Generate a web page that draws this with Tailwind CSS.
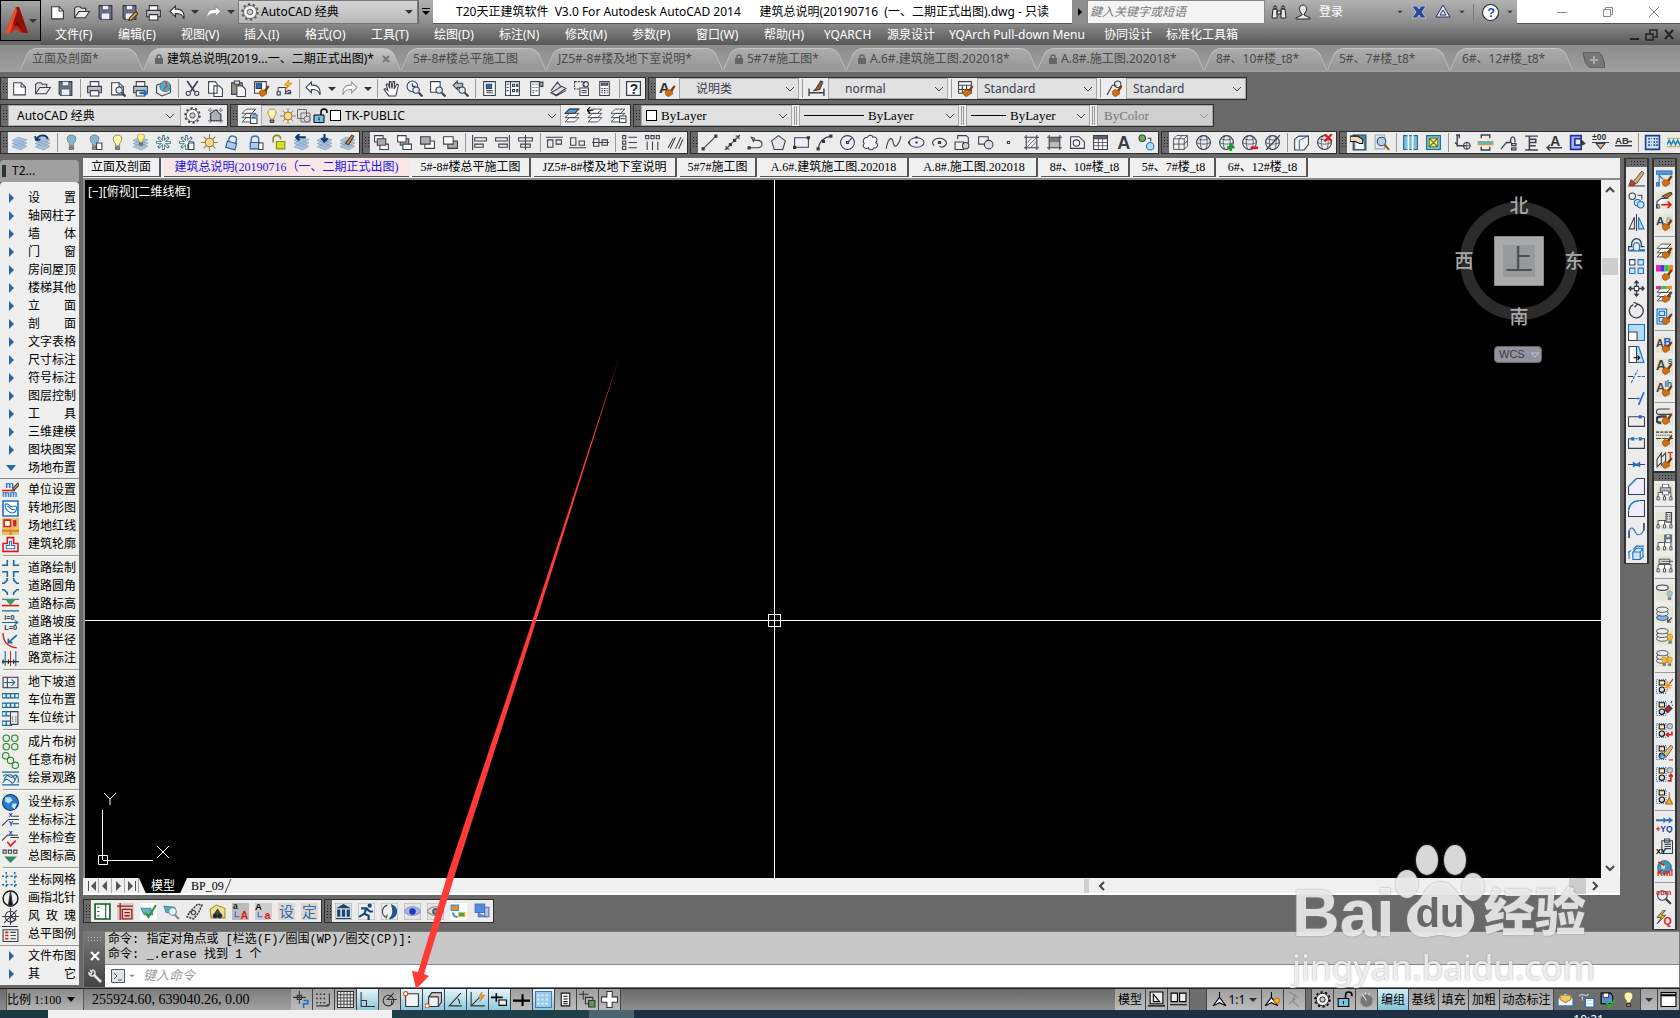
<!DOCTYPE html>
<html lang="zh-CN">
<head>
    <meta charset="UTF-8">
    <meta name="viewport" content="width=device-width, initial-scale=1.0">
    <title>T20天正建筑软件 V3.0 For Autodesk AutoCAD 2014</title>
    <script src="https://cdn.jsdelivr.net/npm/@tailwindcss/browser@4"></script>
</head>
<body class="relative flex min-h-screen flex-col overflow-hidden bg-[#696969] font-['Noto_Sans','Noto_Sans_CJK_SC',sans-serif] text-xs text-black">

    <!-- title bar + menu -->
    <header class="flex">
        <button aria-label="应用程序菜单" class="flex h-[41px] w-[41px] shrink-0 items-center border border-black bg-linear-to-b from-[#a6a6a6] to-[#5e5e5e] pl-1">
            <svg class="h-7 w-6" viewBox="0 0 24 28"><path d="M11 0 0 26h6l5-4 5 4h7L14 0z" fill="#c8240f"/><path d="M11 0 6 20l5-4 5 8 3 2h4L14 0z" fill="#8d1208"/><path d="M11 0 0 26h5L12 4z" fill="#ee4a2c"/><path d="M9 20l3-6 4 6c-2-2-5-2-7 0z" fill="#5c0a05"/></svg>
            <svg class="h-1.5 w-2" viewBox="0 0 8 6"><path d="M0 1h8L4 5z" fill="#333"/></svg>
        </button>
        <div class="flex min-w-0 flex-1 flex-col">
            <div class="flex h-6 bg-linear-to-b from-[#b2b2b2] to-[#8b8b8b]">
                <div class="flex w-[197px] items-center pl-1 text-[#333]" data-icons="new open save saveas print undo . redo ." data-pitch="wide"></div>
                <div class="flex w-[180px] items-center border border-[#777] bg-linear-to-b from-[#d4d4d4] to-[#b8b8b8] pl-0.5">
                    <svg class="size-[18px] text-[#555]" data-icon="gear"></svg>
                    <select aria-label="工作空间" class="min-w-0 flex-1 appearance-none bg-transparent pl-0.5 text-[12px] leading-5"><option>AutoCAD 经典</option></select>
                    <svg class="mr-1 h-1.5 w-2" viewBox="0 0 8 6"><path d="M0 1h8L4 5z" fill="#333"/></svg>
                </div>
                <button aria-label="自定义" class="flex w-[15px] items-center justify-center border-l border-[#666]"><svg class="size-2" viewBox="0 0 8 8"><path d="M0 0h8v1H0zM0 3h8L4 7z"/></svg></button>
                <h1 class="flex flex-1 items-center justify-center overflow-hidden whitespace-pre border-b border-[#555] bg-white text-[12px]">T20天正建筑软件  V3.0 For Autodesk AutoCAD 2014      建筑总说明(20190716  (一、二期正式出图).dwg - 只读</h1>
                <button aria-label="搜索" class="flex w-[15px] items-center justify-center bg-[#8e8e8e]"><svg class="size-2" viewBox="0 0 8 8"><path d="M2 0v8l4-4z"/></svg></button>
                <input aria-label="搜索" placeholder="鍵入关键字或短语" class="w-[178px] border border-[#888] bg-[#f4f4f4] px-0.5 text-[12px] italic placeholder:text-[#777]">
                <div class="flex w-[252px] items-center gap-2 pl-1.5 text-[#222]">
                    <svg class="size-4" data-icon="binoc"></svg>
                    <svg class="size-4" data-icon="user"></svg>
                    <a href="#" class="text-white">登录</a>
                    <svg class="ml-auto h-1 w-1.5" viewBox="0 0 8 6"><path d="M0 1h8L4 5z" fill="#333"/></svg>
                    <svg class="size-4" data-icon="exchange"></svg>
                    <svg class="size-4" data-icon="a360"></svg>
                    <svg class="h-1 w-1.5" viewBox="0 0 8 6"><path d="M0 1h8L4 5z" fill="#333"/></svg>
                    <span class="h-4 w-px bg-[#777]"></span>
                    <svg class="size-[17px]" data-icon="helpround"></svg>
                    <svg class="mr-1 h-1 w-1.5" viewBox="0 0 8 6"><path d="M0 1h8L4 5z" fill="#333"/></svg>
                </div>
                <div class="flex w-[163px] items-center justify-end gap-[34px] border-b border-[#555] bg-white pr-5 text-[#888]">
                    <svg class="size-3" viewBox="0 0 12 12" fill="none" stroke="currentColor"><path d="M1 6.500h10"/></svg>
                    <svg class="size-3" viewBox="0 0 12 12" fill="none" stroke="currentColor"><path d="M1.500 3.500h7v7h-7zM3.500 3.500v-2h7v7h-2"/></svg>
                    <svg class="size-3" viewBox="0 0 12 12" fill="none" stroke="currentColor"><path d="M1 1l10 10M11 1 1 11"/></svg>
                </div>
            </div>
            <nav class="flex h-[21px] items-center whitespace-nowrap bg-linear-to-b from-[#8a8a8a] to-[#575757] pl-0.5 text-[12px] text-white">
                <a href="#" class="w-[63px] pl-3">文件(F)</a><a href="#" class="w-[63px] pl-3">编辑(E)</a><a href="#" class="w-[63px] pl-3">视图(V)</a><a href="#" class="w-[61px] pl-3">插入(I)</a><a href="#" class="w-[66px] pl-3">格式(O)</a><a href="#" class="w-[63px] pl-3">工具(T)</a><a href="#" class="w-[65px] pl-3">绘图(D)</a><a href="#" class="w-[66px] pl-3">标注(N)</a><a href="#" class="w-[67px] pl-3">修改(M)</a><a href="#" class="w-[64px] pl-3">参数(P)</a><a href="#" class="w-[68px] pl-3">窗口(W)</a><a href="#" class="w-[60px] pl-3">帮助(H)</a><a href="#" class="w-[63px] pl-3">YQARCH</a><a href="#" class="w-[62px] pl-3">源泉设计</a><a href="#" class="w-[155px] pl-3">YQArch Pull-down Menu</a><a href="#" class="w-[62px] pl-3">协同设计</a><a href="#" class="pl-3">标准化工具箱</a>
                <svg class="mr-1 ml-auto h-3 w-12 text-[#222]" viewBox="0 0 48 12" fill="none" stroke="currentColor" stroke-width="2"><path d="M2 10h9"/><path d="M18 5h7v6h-7zM22 4V1h7v7h-3" stroke-width="1.500"/><path d="M37 1l8 9M45 1l-8 9"/></svg>
            </nav>
        </div>
    </header>

    <!-- open files -->
    <div id="fileTabs" class="flex h-[27px] items-end bg-linear-to-b from-[#8c8c8c] to-[#a0a0a0] pl-5"></div>

    <!-- toolbars -->
    <div class="flex flex-col gap-1 pt-[5px] pb-1">
        <div class="flex h-[23px] gap-0.5">
            <div data-bar="new open save | print preview plot publish | cut copy paste match blockedit | undo . redo . | pan zoomrt zoomwin zoomprev | props dcenter toolpal sheet markup calc | help"></div>
            <div data-bar="textstyle @说明类 | dimstyle @normal | tablestyle @Standard | mleader @Standard"></div>
        </div>
        <div class="flex h-[23px] gap-0.5">
            <div class="flex w-[228px] border border-[#2e2e2e] bg-[#ececec]">
                <span data-grip></span>
                <div class="relative flex flex-1 border border-[#a8a8a8] bg-[#e1e1e1]">
                    <select aria-label="工作空间" class="w-full appearance-none pl-2 text-[12px] leading-5"><option>AutoCAD 经典</option></select>
                    <svg class="pointer-events-none absolute top-1.5 right-1.5 h-2 w-2" viewBox="0 0 8 8" fill="none" stroke="#444"><path d="M0 2l4 4 4-4"/></svg>
                </div>
                <div class="flex items-center text-[#3a404c]" data-icons="gear wsset"></div>
            </div>
            <div class="flex w-[401px] border border-[#2e2e2e] bg-[#ececec]">
                <span data-grip></span>
                <div class="flex items-center text-[#3a404c]" data-icons="layermgr"></div>
                <div class="relative flex flex-1 items-center border border-[#a8a8a8] bg-[#e1e1e1] pl-0.5">
                    <svg class="size-4" data-icon="bulb"></svg><svg class="size-4" data-icon="sun"></svg><svg class="size-4 opacity-50" data-icon="vpfreeze"></svg><svg class="size-4" data-icon="unlock"></svg>
                    <span class="ml-0.5 size-[11px] border border-black bg-white"></span>
                    <select aria-label="图层" class="min-w-0 flex-1 appearance-none pl-1 leading-5"><option>TK-PUBLIC</option></select>
                    <svg class="pointer-events-none absolute top-1.5 right-1 h-2 w-2" viewBox="0 0 8 8" fill="none" stroke="#444"><path d="M0 2l4 4 4-4"/></svg>
                </div>
                <div class="flex items-center text-[#3a404c]" data-icons="laycur layprev layst"></div>
            </div>
            <div class="flex w-[581px] border border-[#2e2e2e] bg-[#ececec] font-['Liberation_Serif','Noto_Sans_CJK_SC',serif] text-[13px]">
                <span data-grip></span>
                <div class="relative flex w-[151px] items-center border border-[#a8a8a8] bg-[#e1e1e1] pl-1">
                    <span class="size-[11px] border border-black bg-white"></span>
                    <select aria-label="颜色" class="min-w-0 flex-1 appearance-none pl-1 leading-5"><option>ByLayer</option></select>
                    <svg class="pointer-events-none absolute top-1.5 right-1 h-2 w-2" viewBox="0 0 8 8" fill="none" stroke="#444"><path d="M0 2l4 4 4-4"/></svg>
                </div>
                <span class="mx-0.5 my-px w-[3px] border-x border-[#999]"></span>
                <div class="relative flex w-[160px] items-center border border-[#a8a8a8] bg-[#e1e1e1] pl-1">
                    <span class="h-px w-[60px] bg-black"></span>
                    <select aria-label="线型" class="min-w-0 flex-1 appearance-none pl-1 leading-5"><option>ByLayer</option></select>
                    <svg class="pointer-events-none absolute top-1.5 right-1 h-2 w-2" viewBox="0 0 8 8" fill="none" stroke="#444"><path d="M0 2l4 4 4-4"/></svg>
                </div>
                <span class="mx-0.5 my-px w-[3px] border-x border-[#999]"></span>
                <div class="relative flex w-[124px] items-center border border-[#a8a8a8] bg-[#e1e1e1] pl-1">
                    <span class="h-px w-[35px] bg-black"></span>
                    <select aria-label="线宽" class="min-w-0 flex-1 appearance-none pl-1 leading-5"><option>ByLayer</option></select>
                    <svg class="pointer-events-none absolute top-1.5 right-1 h-2 w-2" viewBox="0 0 8 8" fill="none" stroke="#444"><path d="M0 2l4 4 4-4"/></svg>
                </div>
                <span class="mx-0.5 my-px w-[3px] border-x border-[#999]"></span>
                <div class="relative flex flex-1 items-center border border-[#a8a8a8] bg-[#cfcfcf] pl-1.5 text-[#777]">
                    <select aria-label="打印样式" disabled class="min-w-0 flex-1 appearance-none leading-5"><option>ByColor</option></select>
                    <svg class="pointer-events-none absolute top-1.5 right-1 h-2 w-2" viewBox="0 0 8 8" fill="none" stroke="#999"><path d="M0 2l4 4 4-4"/></svg>
                </div>
            </div>
        </div>
        <div class="flex h-[23px] gap-0.5">
            <div data-bar="laystack layback | bulboff bulboffdoc bulb bulblay flake flakedoc sunlay lockb lockdoc unlocky layarr laydown laypen"></div>
            <div data-bar="front back above under | alignl alignr alignc | disth distb distm | listv listh hatchl"></div>
            <div data-bar="line cline pline polygon rect arc circle cloud spline ellipse earc insert mkblock point hatch gradient region table text addsel"></div>
            <div data-bar="cube sphere sphadd sphdel sphoff | cubecut sphx"></div>
            <div data-bar="hand find | col2 window | axis beam leader elev atext brk level abtext | grid wave"></div>
        </div>
    </div>

    <div class="flex flex-1">
        <!-- tool palette -->
        <aside class="flex w-[79px] shrink-0 flex-col pt-0.5 pb-[3px]">
            <div class="flex h-[22px] items-center rounded-t bg-[#a0a0a0] pl-0.5"><span class="h-3 w-1 bg-[radial-gradient(#333_1px,transparent_1px)] bg-[size:2px_3px]"></span><span class="pl-1.5">T2...</span></div>
            <div id="palette" class="flex flex-1 flex-col rounded-t bg-[#efefef] pt-[7px]"></div>
        </aside>

        <main class="ml-1 flex min-w-0 flex-1 flex-col">
            <div class="flex flex-1">
                <div class="flex min-w-0 flex-1 flex-col">
                    <div class="mr-1 flex flex-1 flex-col">
                        <div id="docTabs" class="flex h-5 gap-[3px] bg-[#f0f0f0] font-['Liberation_Serif','Noto_Sans_CJK_SC',serif] text-[12px]"></div>
                        <div class="flex flex-1 border-t-2 border-l-2 border-[#8a8a8a]">
                            <!-- drawing area -->
                            <section class="relative flex-1 overflow-hidden bg-black text-white">
                                <div class="absolute top-1 left-[3px] text-[12px] whitespace-nowrap">[−][俯视][二维线框]</div>
                                <div class="absolute inset-y-0 left-[689px] w-px bg-white"></div>
                                <div class="absolute inset-x-0 top-[440px] h-px bg-white"></div>
                                <div class="absolute top-[434px] left-[683px] size-[13px] border border-white"></div>
                                <svg class="absolute bottom-3 left-[10px] h-[74px] w-[78px]" viewBox="0 0 78 74" fill="none" stroke="#fff"><path d="M3.500 63.500h9v9h-9zM7.500 68V18M8 68.500h50M9 1l6 6 6-6M15 7v6M62 54l12 12M74 54 62 66"/></svg>
                                <svg class="absolute top-[10px] right-[15px] h-[162px] w-[134px]" viewBox="0 0 134 162" font-family="Noto Sans CJK SC, sans-serif">
                                    <circle cx="67" cy="71" r="53" fill="none" stroke="#2b2b2b" stroke-width="12"/>
                                    <g fill="#a8a8a8" font-size="19" font-weight="500" text-anchor="middle"><text x="67" y="23">北</text><text x="67" y="134">南</text><text x="12" y="78">西</text><text x="122" y="78">东</text></g>
                                    <path d="M42.500 46.500h49v49h-49z" fill="#aaa" stroke="#888"/><path d="M51 55h32v32H51z" fill="#969a9c"/>
                                    <text x="67" y="80" font-size="28" text-anchor="middle" fill="#4c5052" font-family="Noto Sans CJK SC">上</text>
                                </svg>
                                <button class="absolute top-[166px] right-[59px] flex h-[17px] w-12 items-center gap-1.5 rounded border border-[#666] bg-[#92939f] pl-1 font-['Liberation_Sans',sans-serif] text-[11px] text-[#3c3c44]">WCS<svg class="h-1.5 w-2" viewBox="0 0 8 6" fill="none" stroke="#c0c0cc"><path d="M0 1h8L4 5z"/></svg></button>
                            </section>
                            <div class="flex w-[19px] flex-col items-center border-r border-white bg-[#f0f0f0] text-[#444]">
                                <svg class="mt-1 h-3 w-2.5" viewBox="0 0 10 12" fill="none" stroke="currentColor" stroke-width="2"><path d="M1 8l4-4 4 4"/></svg>
                                <span class="mt-[62px] h-[17px] w-4 bg-[#cdcdcd]"></span>
                                <svg class="mt-auto mb-1 h-3 w-2.5" viewBox="0 0 10 12" fill="none" stroke="currentColor" stroke-width="2"><path d="M1 4l4 4 4-4"/></svg>
                            </div>
                        </div>
                        <div class="flex h-[17px] items-center border-b-2 border-white bg-[#f0f0f0] pl-[3px] font-['Liberation_Serif','Noto_Sans_CJK_SC',serif] text-[12px]">
                            <button aria-label="第一个" class="flex h-full w-[13px] items-center justify-center border-r border-[#aaa]"><svg class="size-2.5" viewBox="0 0 10 10" fill="#555"><path d="M1 0h1v10H1zM9 0v10L4 5z"/></svg></button>
                            <button aria-label="上一个" class="flex h-full w-[13px] items-center justify-center border-r border-[#aaa]"><svg class="size-2.5" viewBox="0 0 10 10" fill="#555"><path d="M7 0v10L2 5z"/></svg></button>
                            <button aria-label="下一个" class="flex h-full w-[13px] items-center justify-center border-r border-[#aaa]"><svg class="size-2.5" viewBox="0 0 10 10" fill="#555"><path d="M3 0v10l5-5z"/></svg></button>
                            <button aria-label="最后一个" class="flex h-full w-[14px] items-center justify-center border-r border-[#aaa]"><svg class="size-2.5" viewBox="0 0 10 10" fill="#555"><path d="M8 0h1v10H8zM1 0v10l5-5z"/></svg></button>
                            <button class="h-full w-[48px] bg-black text-center leading-4 text-white [clip-path:polygon(0_0,100%_0,86%_100%,14%_100%)]">模型</button>
                            <button class="pl-1">BP_09</button>
                            <svg class="h-4 w-2" viewBox="0 0 8 16" fill="none" stroke="#444"><path d="M1 15 7 1"/></svg>
                            <span class="mr-2 ml-auto h-3.5 w-[5px] bg-[#d0d0d0]"></span>
                            <div class="flex w-[523px] items-center text-[#444]">
                                <svg class="size-2.5" viewBox="0 0 10 10" fill="none" stroke="currentColor" stroke-width="2"><path d="M7 1 3 5l4 4"/></svg>
                                <span class="mr-1 ml-auto h-4 w-[17px] bg-[#cdcdcd]"></span>
                                <svg class="mr-5 size-2.5" viewBox="0 0 10 10" fill="none" stroke="currentColor" stroke-width="2"><path d="M3 1l4 4-4 4"/></svg>
                            </div>
                        </div>
                    </div>
                    <div class="mt-1 mb-2 flex h-6 gap-0.5">
                        <div data-bar="bframe bdim bcheck bview bgear bhouse bAA bAa bshe bding"></div>
                        <div data-bar="bank runner swap eye eyeg imgsw pc"></div>
                    </div>
                </div>
                <!-- modify toolbars -->
                <div class="flex items-start gap-[3px] pr-[3px]">
                    <div data-vbar="erase copyobj mirror offset array move rotate scale stretch trim extend breakpt break join chamfer fillet blend explode"></div>
                    <div class="flex flex-col">
                        <div data-vbar="mprop mline mtext | mlay mcolor mlaycol mblock | mAB mAs mAh | mcloud mltype mhatch"></div>
                        <div data-vbar="tprint | tcalc tsave topen | gbulb gload glamp glamps | sspark sred sundo serase sredo ssweep | yq clip kml | com flashq"></div>
                    </div>
                </div>
            </div>

            <!-- command line -->
            <div class="flex h-[57px] shrink-0 border border-[#777]">
                <div class="flex w-[21px] flex-col items-center justify-between bg-linear-to-b from-[#7a7a7a] to-[#444] pt-1 pb-1">
                    <span class="h-1.5 w-4 bg-[radial-gradient(#bbb_1px,transparent_1px)] bg-[size:3px_3px]"></span>
                    <svg class="size-2.5" viewBox="0 0 10 10" fill="none" stroke="#fff" stroke-width="2"><path d="M1 1l8 8M9 1 1 9"/></svg>
                    <svg class="size-3.5" viewBox="0 0 14 14" fill="none" stroke="#e8e8e8" stroke-width="2.500"><path d="M6 6l7 7"/><path d="M2 1l2 2-1 2-2-1c0 3 3 4 5 2 2-2 1-5-2-5" stroke-width="1.500"/></svg>
                </div>
                <div class="flex flex-1 flex-col">
                    <div class="h-[33px] border-b border-[#888] bg-[#c8c8c8] pt-px pl-[3px] font-['Liberation_Mono','Noto_Sans_CJK_SC',monospace] text-[12px] leading-[15px] whitespace-pre">命令: 指定对角点或 [栏选(F)/圈围(WP)/圈交(CP)]:
命令: _.erase 找到 1 个</div>
                    <div class="flex flex-1 items-center bg-white pl-1.5">
                        <svg class="size-3.5 bg-[#dfe3ea]" viewBox="0 0 14 14" fill="none" stroke="#556"><path d="M.5.5h13v13H.5zM3 4l3 3-3 3M7 11h4"/></svg>
                        <svg class="ml-1 h-1 w-1.5" viewBox="0 0 8 6"><path d="M0 1h8L4 5z" fill="#888"/></svg>
                        <input aria-label="键入命令" placeholder="键入命令" class="ml-2 flex-1 text-[13px] italic placeholder:text-[#999]">
                    </div>
                </div>
            </div>
        </main>
    </div>

    <!-- status bar -->
    <footer class="flex h-[22px] shrink-0 border-t border-[#222] bg-linear-to-b from-[#6a6a6a] to-[#8e8e8e]">
        <button class="ml-1.5 flex w-[78px] items-center gap-1.5 border-x border-[#555] bg-linear-to-b from-[#8a8a8a] to-[#b4b4b4] font-['Liberation_Serif','Noto_Sans_CJK_SC',serif] text-[12px]">比例 1:100<svg class="h-1.5 w-2" viewBox="0 0 8 6"><path d="M0 0h8L4 5z"/></svg></button>
        <output class="w-[207px] bg-linear-to-b from-[#7c7c7c] to-[#a2a2a2] pl-2 font-['Liberation_Serif',serif] text-[14px] leading-[22px]">255924.60, 639040.26, 0.00</output>
        <div id="toggles" class="flex"></div>
        <div id="statusRight" class="ml-auto flex"></div>
    </footer>
    <div class="flex h-2 shrink-0 overflow-hidden bg-[#1d2f42]"><span class="w-12 bg-[#1d3a42]"></span><span class="w-[344px] bg-[#f0f0f0]"></span><span class="w-[197px] bg-[#1f3f4b]"></span><span class="w-[45px] bg-[#4b6470]"></span><span class="mr-[76px] ml-auto pt-0.5 leading-4 text-white">10:21</span></div>

    <!-- red pointer -->
    <svg class="pointer-events-none absolute top-[356px] left-[410px] h-[634px] w-[214px]" viewBox="0 0 214 634"><path d="M209.500 0 118 278 39 514 8 616l-6-1 4 18 13-13-5-2 33-106 75-234z" fill="#ff3a37"/></svg>

    <!-- watermark -->
    <div class="pointer-events-none absolute right-[84px] bottom-[26px] flex w-[304px] flex-col text-white/75 drop-shadow-[0_0_1px_#888]">
        <div class="flex h-[98px] items-end">
            <span class="w-[104px] font-['Liberation_Sans',sans-serif] text-[66px] leading-[58px] font-bold">Bai</span>
            <svg class="h-[98px] w-[88px]" viewBox="0 0 88 98" fill="#fff" fill-opacity=".75"><ellipse cx="11" cy="40" rx="11" ry="14"/><ellipse cx="31" cy="16" rx="11" ry="15"/><ellipse cx="59" cy="16" rx="11" ry="15"/><ellipse cx="77" cy="43" rx="11" ry="14"/><path d="M44 38c-14 0-16 16-26 23-12 9-8 32 10 32 8 0 10-2 16-2s8 2 16 2c18 0 24-22 12-32-12-9-14-23-28-23z"/><text x="44" y="83" text-anchor="middle" font-size="40" font-weight="bold" font-family="Liberation Sans, sans-serif" fill="#686868" fill-opacity="1">du</text></svg>
            <span class="font-['Noto_Sans_CJK_SC',sans-serif] text-[51px] leading-[66px] font-black">经验</span>
        </div>
        <span class="text-[35px] leading-[50px]">jingyan.baidu.com</span>
    </div>

    <script>
        // shared pieces of the icons, all on a 16x16 grid
        const B = '#1c6fc4', R = '#e01818';
        const brush = '<path d="M10 10l4-5 1.500 1-3 5z" fill="#7a3c12" stroke="none"/><path d="M6 11l2-2 4 1 1 3-4 2.500c-2-.5-3.500-2-3-4.500z" fill="#d2700f" stroke="#8a430a" stroke-width=".6"/>';
        const mag = '<circle cx="9.500" cy="9.500" r="3" fill="#dcebf7"/><path d="M12 12l3.500 3.500" stroke-width="2"/>';
        const sheets = '<path d="M1 12l6-3 8 2.500-6 3.500zM1 9l6-3 8 2.500L9 12zM1 6l6-3 8 2.500L9 9z" fill="#a9c4de" stroke="#7f9cba" stroke-width=".6"/>';
        const stack = '<path d="M1 14h9l4-4H5zM1 10h9l4-4H5zM1 6h9l4-4H5z" fill="#fff" stroke-width=".8"/>';
        const lamp = c => `<path d="M8 1c-5 0-5 5-2 8v2h4V9c3-3 3-8-2-8z" fill="${c}" stroke="#8b7a3a" stroke-width=".8"/><path d="M6 12h4v2.500H6z" fill="#889" stroke-width=".6"/>`;
        const printer = '<path d="M4 6V1.500h8V6" fill="#fff"/><path d="M1.500 6h13v6h-13z" fill="#b9bec6"/><path d="M4 10h8v5H4z" fill="#fff"/>';
        const page = '<path d="M2.500 2.500h7l4 4v7.500h-11z" fill="#fff"/><path d="M9.500 2.500v4h4"/>';
        const globe = '<circle cx="8" cy="8" r="6.500" fill="#e6eaee"/><path d="M1.500 8c3 2 10 2 13 0M3 4.500c3 1.500 7 1.500 10 0M6.500 1.500c-2 4-2 9 0 13M10 1.500c2 4 2 9 0 13" stroke-width=".7"/>';
        const lock = '<path d="M4 8V5c0-4 7-4 7 0v3" stroke="#4a7ab0" stroke-width="1.500"/><path d="M3 8h9v6H3z" fill="#a8cdee" stroke="#2a5a9a"/>';
        const flake = '<path d="M8 1v14M1 8h14M3 3l10 10M13 3 3 13" stroke="#4a7a84" stroke-width="2.500"/><path d="M8 2v12M2 8h12M4 4l8 8M12 4l-8 8" stroke="#e8f4f6"/>';
        const sun = '<path d="M8 0v16M0 8h16M2.500 2.500l11 11M13.500 2.500l-11 11" stroke="#886"/><circle cx="8" cy="8" r="4" fill="#f8d890" stroke="#a8761c"/>';
        const disk = '<path d="M2 1.500h12v13H3.500L2 13z" fill="#6b7688"/><path d="M5 1.500h6v4H5zM4 8.500h8v6H4z" fill="#eef" stroke-width=".6"/>';
        const undo = '<path d="M1 7l5-5v3c6-1 9 3 8 9-1-4-3-5-8-5v3z" fill="#fff"/>';
        const sel = '<path d="M.5 1.500h9v13h-9z" stroke="#3d6fb8" stroke-dasharray="1 1"/><path d="M3 2.500h5v4H3z" fill="#ffeeb0" stroke="#111"/><circle cx="5.500" cy="11" r="2.500" fill="#ddd" stroke="#111"/>';
        const tan = '<path d="M0 0h16v16H0z" fill="#e6e4d2" stroke="none"/>';
        const tree = '<path d="M1 15v-3h2v3zM7 15v-3h2v3zM13 15v-3h2v3zM2 12V8h12v4M8 12V8" fill="#fff" stroke-width=".8"/>';
        const discs = '<g fill="#eee" stroke-width=".8"><ellipse cx="6" cy="10" rx="5.500" ry="2.500"/><ellipse cx="6" cy="6.500" rx="5.500" ry="2.500"/><ellipse cx="6" cy="3" rx="5.500" ry="2.500"/></g>';
        const ch = (t, x, y, s, c) => `<text x="${x}" y="${y}" font-size="${s}" fill="${c}" stroke="none" font-weight="bold" font-family="Liberation Sans, Noto Sans CJK SC">${t}</text>`;

        const I = {
            new: page, open: '<path d="M1.500 13V4l2-1.500h3L8 4h4v3" fill="#ddd"/><path d="M1.500 13l4-6h10l-4 6z" fill="#e9edf2"/>',
            save: disk, saveas: disk + '<path d="M8 13l6-6 2 2-6 6-2.500.5z" fill="#f0a030"/>', print: printer, undo,
            redo: `<g transform="matrix(-1 0 0 1 16 0)" stroke="#999">${undo}</g>`,
            gear: '<circle cx="8" cy="8" r="7" stroke-dasharray="2.200 2.200" stroke-width="1.500"/><circle cx="8" cy="8" r="5.800" fill="#f4f4f4" stroke-width=".8"/><circle cx="8" cy="8" r="2.500" fill="#ccc" stroke-width=".8"/>',
            binoc: '<path d="M2 5h4v9H1zM10 5h4l1 9h-5zM3 2h2v3H3zM11 2h2v3h-2zM6 7h4v3H6z" fill="#e8e8e8"/>',
            user: '<path d="M8 1c-5 0-4 7-1 9v1l-6 3v1h14v-1l-6-3v-1c3-2 4-9-1-9z" fill="#e8e8e8"/>',
            exchange: '<path d="M1 2h5l2 3 2-3h5l-4 6 4 6h-5l-2-3-2 3H1l4-6z" fill="#2b4a9a" stroke="#e0e4f0" stroke-width=".6"/>',
            a360: '<path d="M8 1l7 12H1zM8 6l3 5H5z" fill="#e4e8f4" stroke="#26335c"/>',
            helpround: '<circle cx="8" cy="8" r="7.500" fill="#fff" stroke="#223"/>' + ch('?', 5, 12.500, 12, '#1d4fb4'),
            preview: page + mag, plot: printer + `<path d="M7 11h4V8.500l4.500 4-4.500 3.500v-2.500H7z" fill="${B}" stroke="none"/>`,
            publish: '<path d="M1.500 5l8-3 5 3v7l-8 3-5-3z" fill="#eee"/><circle cx="9.500" cy="6" r="5" fill="#4bb0cc" stroke-width=".5"/><path d="M9 1c3 2 2 6-1 8l4-4" fill="#e8c22a" stroke="#d33"/>',
            cut: '<path d="M3 1l7 10M13 1 6 11" stroke-width="1.500"/><circle cx="4" cy="12.500" r="2"/><circle cx="12" cy="12.500" r="2"/>',
            copy: '<path d="M1.500 1.500h6l2 2v9h-8zM6.500 5.500h5l3 3v7h-8z" fill="#fff"/>',
            paste: '<path d="M1.500 2.500h10v11h-10z" fill="#9a8f80"/><path d="M4 1h5v3H4z" fill="#ddd"/><path d="M6.500 5.500h5l3 3v7h-8z" fill="#fff"/>',
            match: `<path d="M1.500 1.500h11v11h-11z" fill="#fff"/><path d="M3 3h5v5H3z" fill="${B}"/>` + brush,
            blockedit: '<path d="M2 7h7v5c2-3 5-3 5 0h-3M2 7v4M1 11h3v3H1zM8 13h6" /><path d="M12 0L8 5h3l-2 4 6-6h-3z" fill="#f5c518" stroke="#d8701c" stroke-width=".7"/>',
            pan: '<path d="M5.500 15 1 9l1-1 2.500 2L3 4l1.500-.5L6.500 8 6 1.500h1.500L8.500 8l1-6.500H11L10.500 8.500 13 4l1.500.5L12 15z" fill="#fff"/>',
            zoomrt: '<circle cx="6" cy="6" r="5" fill="#eef"/><path d="M6 3v3h3"/>' + mag, zoomwin: '<path d="M1.500 1.500h9v10h-9z" fill="#fff"/>' + mag,
            zoomprev: '<path d="M1 5l4-4v2h5v4H5v2z" fill="#bbb"/>' + mag,
            props: `<path d="M2.500 1.500h11v13h-11z" fill="#fff"/><path d="M5 4h5v4H5z" fill="${B}"/><path d="M5 10h6M5 12h6"/>`,
            dcenter: '<path d="M1.500 1.500h13v13h-13zM6 2v12" fill="#fff"/><path d="M2.500 4h2M2.500 7h2M2.500 10h2M8 4h2v2H8zM12 4h1v2h-1zM8 9h2v2H8zM12 9h1v2h-1z"/>',
            toolpal: '<path d="M3.500 1.500h8v13h-8z" fill="#fff"/><path d="M5 4h2M8 4h2M5 7h2M8 7h2M5 10h2M8 10h2M5 12h2" stroke="#777"/><path d="M12 2h3v4h-3z" fill="#aaa"/>',
            sheet: '<path d="M1 12l10-6 4 2-9 6zM1 10l6-8 3 4M1 12l5 3 9-5" fill="#ddd"/>',
            markup: '<path d="M1.500 1.500h9v7h-9z" stroke-dasharray="2 1"/><path d="M6.500 7.500h8v7h-8z" fill="#fff"/><path d="M8 10h5M8 12h5"/><circle cx="12" cy="4" r="2.500"/>',
            calc: '<path d="M3.500 1.500h9v13h-9z" fill="#fff"/><path d="M5 3h6v2H5z" fill="#777"/><path d="M5 8h6M5 10h6M5 12h6" stroke-dasharray="1.500 1"/>',
            help: '<path d="M1.500 1.500h13v13h-13z" fill="#fff" stroke-width="1.200"/>' + ch('?', 4.500, 13, 13, '#223'),
            textstyle: ch('A', 0, 12, 14, '#333') + brush, dimstyle: '<path d="M1 8v7M15 8v7M1 12h14" stroke-width="1.300"/><path d="M7 9l5-8 2 1-3 7-6 1z" fill="#b55a15"/>',
            tablestyle: '<path d="M1.500 1.500h12v11h-12zM1 5h12M1 9h12M5 5v8M9 5v8" fill="#fff"/>' + brush,
            mleader: '<path d="M1 14 6 5h4"/><circle cx="11" cy="4" r="3"/>' + brush,
            wsset: '<path d="M3.500 13V6l5-3.500 4.500 5V13z" fill="#aab2ba"/><path d="M1 3h14M1 13h14M3 1v14M13 1v14" stroke-width=".8" stroke-dasharray="1.500 1"/>',
            layermgr: stack + '<path d="M9 7.500h6v8H9z" fill="#fff"/><path d="M10 9h4v2h-4z" fill="#1c6fc4" stroke="none"/>',
            bulb: lamp('#fff3b0'), sun, vpfreeze: '<path d="M1.500 1.500h9v9h-9zM5 5h9v9H5z" fill="#ddd"/><circle cx="11" cy="11" r="3" fill="#ccc"/>',
            unlock: '<path d="M9 7V4c0-4 6-4 6 0v1" stroke-width="1.500"/><path d="M2 7h10v7.500H2z" fill="#7ac3e8"/><path d="M7 9.500v3"/>',
            laycur: stack + '<path d="M1 6h9l4-4H5z" fill="#4aa0e0"/>', layprev: stack + '<path d="M0 3h6M3 0 0 3l3 3" stroke="#000"/>', layst: stack + '<path d="M9 8.500h6v6H9z" fill="#fff"/><path d="M10 11h4"/>',
            laystack: sheets, layback: sheets + '<path d="M2 6c2-6 10-6 11-1M2 6 1 2M2 6l4-1" stroke="#123a6a" stroke-width="1.800"/>',
            bulboff: lamp('#7db8dd'), bulboffdoc: lamp('#7db8dd') + '<path d="M10 8.500h5v6h-5z" fill="#fff"/>', bulblay: sheets + `<g transform="translate(2 -1) scale(.8)">${lamp('#fff08a')}</g>`,
            flake, flakedoc: flake + '<path d="M10 8.500h5v6h-5z" fill="#fff"/>', sunlay: sun,
            lockb: '<g transform="rotate(15 8 8)">' + lock + '</g>', lockdoc: lock + '<path d="M11 8.500h4v6h-4z" fill="#fff"/>',
            unlocky: '<path d="M3 8V5c0-5 7-5 7 0" stroke="#8a8a18" stroke-width="1.500"/><path d="M6 7h8v7H6z" fill="#d7dc2a" stroke="#8a8a18"/>',
            layarr: sheets + '<path d="M3 3h9M6 0 3 3l3 3" stroke="#123a6a" stroke-width="2"/>', laydown: sheets + '<path d="M8 0v6M5 4l3 3 3-3" stroke="#123a6a" stroke-width="2"/>',
            laypen: sheets + '<path d="M6 9l6-8 2 1-5 8z" fill="#f08a1c"/>',
            front: '<path d="M1.500 1.500h8v6h-8zM6.500 9.500h8v5h-8z" fill="#fff"/><path d="M4 4.500h8v6H4z" fill="#aaa"/>', back: '<path d="M4 4.500h8v6H4z" fill="#aaa"/><path d="M1.500 1.500h8v6h-8zM6.500 9.500h8v5h-8z" fill="#fff"/>',
            above: '<path d="M5.500 6.500h9v7h-9z" fill="#fff"/><path d="M1.500 2.500h9v7h-9z" fill="#aaa"/>', under: '<path d="M5.500 6.500h9v7h-9z" fill="#aaa"/><path d="M1.500 2.500h9v7h-9z" fill="#fff"/>',
            alignl: '<path d="M1.500 1v14M3.500 3.500h11v3h-11zM3.500 9.500h8v3h-8z"/>', alignr: '<path d="M14.500 1v14M1.500 3.500h11v3h-11zM4.500 9.500h8v3h-8z"/>', alignc: '<path d="M8 1v14M1.500 3.500h13v3h-13zM3.500 9.500h9v3h-9z"/>',
            disth: '<path d="M0 3h16M1.500 5.500h5v7h-5zM9.500 5.500h5v4h-5z"/>', distb: '<path d="M0 13h16M1.500 3.500h5v7h-5zM9.500 6.500h5v4h-5z"/>', distm: '<path d="M0 8h16M1.500 4.500h5v7h-5zM9.500 5.500h5v5h-5z"/>',
            listv: '<path d="M1.500 1.500h3v3h-3zM1.500 6.500h3v3h-3zM1.500 11.500h3v3h-3zM7 3h8M7 8h8M7 13h8"/>', listh: '<path d="M1.500 1.500h3v3h-3zM6.500 1.500h3v3h-3zM11.500 1.500h3v3h-3zM3 7v8M8 7v8M13 7v8"/>', hatchl: '<path d="M1 13 6 4M3 14 8 3M8 14l5-11M11 14l4-9"/>',
            line: '<path d="M2 14 14 2"/><path d="M1 13h2v2H1zM13 1h2v2h-2z" fill="#333"/>', cline: '<path d="M1 15 15 1M11 2h3v3M2 11v3h3"/><path d="M5 9h2v2H5zM9 5h2v2H9z" fill="#333"/>',
            pline: '<path d="M2 13h8c6 0 5-7 0-7H7M7 4 4 3l2 4z"/><path d="M1 12h2v2H1z" fill="#333"/>', polygon: '<path d="M8 1.500l6.500 5-2.500 8H4l-2.500-8z" fill="#e4e8ee"/>',
            rect: '<path d="M1.500 3.500h13v9h-13z" fill="#eef"/><path d="M0 11h3v3H0zM13 2h3v3h-3z" fill="#333" stroke="none"/>', arc: '<path d="M2 14C3 7 8 3 14 2"/><path d="M1 13h2v2H1zM6 6h2v2H6zM13 1h2v2h-2z" fill="#333"/>',
            circle: '<circle cx="8" cy="8" r="6.500" fill="#eef"/><path d="M8 8l4-4M7 7h2v2H7z"/>', cloud: '<path d="M5 3c2-3 5-2 5 0 4-1 5 3 3 5 3 2 1 6-2 5-1 3-5 2-5 0-4 2-6-2-4-4C0 6 2 3 5 3z" fill="#f4f6fa"/>',
            spline: '<path d="M1 14C4 0 7 4 8 9s5 2 7-7"/>', ellipse: '<ellipse cx="8" cy="8" rx="7" ry="4.500" fill="#eef"/><path d="M7 7h2v2H7zM0 7h2v2H0zM7 2h2v2H7z" fill="#333" stroke="none"/>',
            earc: '<path d="M3 11C-1 7 4 4 8 4s8 3 6 6-5 3-6 1"/><path d="M7 7h2v2H7z" fill="#333"/>', insert: '<path d="M3.500 5V1.500h8l2 2V9M1 7.500h8v7H1z" fill="#eee"/><circle cx="11" cy="11" r="3" fill="#ccc"/>',
            mkblock: '<path d="M1.500 2.500h9v7h-9z" fill="#eee"/><circle cx="11" cy="10" r="4" fill="#dde"/>', point: '<path d="M7 7h2v2H7z"/>',
            hatch: '<path d="M1 3h14M1 13h14M3 1v14M13 1v14"/><path d="M4 8l4-4M4 12l8-8M7 13l6-6" stroke-width=".6"/>', gradient: '<path d="M3 3h10v5H3z" fill="#777" stroke="none"/><path d="M3 8h10v5H3z" fill="#bbb" stroke="none"/><path d="M1 3h14M1 13h14M3 1v14M13 1v14"/>',
            region: '<path d="M1.500 13.500v-11h8l5 5v6z" fill="#eef"/><circle cx="7" cy="8.500" r="3" fill="#fff"/>', table: '<path d="M1.500 1.500h13v13h-13z" fill="#fff"/><path d="M1.500 1.500h13v3h-13z" fill="#667"/><path d="M1 8h14M1 11h14M6 4v11M10 4v11" stroke-width=".7"/>',
            text: ch('A', 2, 14, 17, '#3a3f48'), addsel: '<circle cx="4" cy="4" r="3" fill="#6bb34a"/><path d="M9 4h3v3"/><circle cx="11.500" cy="11.500" r="3.500" fill="#b4dcf6" stroke="#1c6fc4"/>',
            cube: '<path d="M1.500 4.500h10v10h-10zM1.500 4.500l3-3h10v10l-3 3M11.500 4.500l3-3M1.500 9.500h10l3-3M6.500 4.500v10M6.500 4.500l3-3" fill="#f4f4f4" stroke-width=".8"/>', sphere: globe,
            sphadd: globe + '<path d="M12 9v7M8.500 12.500h7" stroke="#1d9a26" stroke-width="2.500"/>', sphdel: globe + `<path d="M9 13h7" stroke="${R}" stroke-width="2.500"/>`, sphoff: globe + '<path d="M2 15 15 1" stroke-width="1.200"/>',
            cubecut: `<path d="M1.500 5l4-3h9v8l-4 5h-9z" fill="#f4f4f4"/><path d="M6 6l8-4M6 6v8" stroke="${B}"/>`, sphx: globe + `<path d="M8 0l7 7M15 0 8 7" stroke="${R}" stroke-width="2"/>`,
            hand: '<path d="M3 1h12v14H3z" fill="#3d8ea8"/><path d="M5 7h8v7H5z" fill="#fff" stroke="none"/><path d="M0 2h7l5 3v4H9L5 7H0z" fill="#f5d4b4" stroke="#111"/>', find: '<path d="M2 1h9v13H2z" fill="#dde6ee" stroke="#9ab"/><circle cx="8" cy="7" r="4" fill="#a9d3ee"/><path d="M11 10l4 5" stroke="#8a5a20" stroke-width="2"/>',
            col2: '<path d="M1.500 1.500h13v13h-13z" fill="#7cc0d8" stroke="#1c6a8a"/><path d="M6 1v14M10 1v14" stroke="#fff" stroke-width="1.500"/>', window: '<path d="M1.500 1.500h13v13h-13z" fill="#7cc0d8" stroke="#1c6a8a"/><path d="M4 4h8v8H4zM4 4l8 8M12 4l-8 8" fill="#f1ec7a" stroke="#6a7a2a"/>',
            axis: '<path d="M3 1v10h8M2 1h3v3M1 8l3 3" stroke-width="1.300"/><circle cx="12" cy="11" r="3"/><path d="M8 11h8M12 7v8" stroke-width=".7"/>', beam: '<path d="M1 7h14v3H1z" fill="#58b6c8" stroke="#c8a23a"/><path d="M4 4V1h8v3M4 12v3h8v-3" stroke-width="1.300"/>',
            leader: '<path d="M1 14l5-6h5M10 8c-1-7 5-7 4 0M11 9h4v2h-4zM11 13h4v2h-4z" stroke-width="1.200"/>', elev: '<path d="M2 2h12M6 2v13M6 5h6v3H6M2 15h12M6 11h6" stroke-width="1.400"/>',
            atext: ch('A', 4, 11, 13, '#333') + '<path d="M1 13h14M4 10l-3 3 3 3" stroke-width="1.300"/>', brk: '<path d="M1.500 1.500h10v3h-6v6h6v4h-10z" fill="#9fb6f6" stroke="#2230a8" stroke-width="1.500"/><path d="M11 5v6l4-2z" fill="#333"/>',
            level: ch('±00', 0, 6, 8, '#333') + '<path d="M0 8h16M4 9l4 5 4-5z" fill="#e9b48a"/>', abtext: ch('AB', 0, 9, 9, '#333') + '<path d="M0 11h16M12 7h4" stroke-width="1.300"/>',
            grid: '<path d="M1.500 1.500h13v13h-13z" fill="#cfe3f6" stroke="#1b3e8a" stroke-width="1.500"/><path d="M4 4.500h3M9 4.500h4M4 7.500h3M9 7.500h4M4 10.500h3M9 10.500h4" stroke="#1b3e8a" stroke-dasharray="1.500 1" stroke-width="1.500"/>', wave: '<path d="M0 4h16M0 12h16" stroke="#c8a23a"/><path d="M0 10l2-4 2 4 2-4 2 4 2-4 2 4 2-4 2 4" stroke="#1c88b8" stroke-width="1.500"/>',
            erase: '<path d="M5 11l8-10 2 2-7 10z" fill="#d9b25a" stroke-width=".8"/><path d="M3 9l4 4-2 2-4-1z" fill="#d9361c" stroke-width=".8"/><path d="M0 15h16"/>', copyobj: `<circle cx="4" cy="4" r="3"/><path d="M9 3h4v4"/><g stroke="${B}" fill="#cfe6fa"><circle cx="9" cy="10" r="3"/><circle cx="12" cy="12" r="3"/></g>`,
            mirror: `<path d="M6 3v11H1zM8 0v16"/><path d="M10 3v11h5z" fill="#b4dcf6" stroke="${B}"/>`, offset: `<path d="M.5 14v-4h3C2 0 14 0 12.500 10h3" stroke-width="1.300"/><path d="M.5 14h15v-1h-5c3-9-8-9-5 0h-3" stroke="${B}"/>`,
            array: `<path d="M1.500 1.500h5v5h-5z" fill="#fff"/><path d="M9.500 1.500h5v5h-5zM1.500 9.500h5v5h-5zM9.500 9.500h5v5h-5z" fill="#cfe6fa" stroke="${B}"/>`, move: '<path d="M8 1v14M1 8h14M6 3l2-2 2 2M6 13l2 2 2-2M3 6 1 8l2 2M13 6l2 2-2 2" stroke-width="1.400"/><path d="M6 6h4v4H6z" fill="#fff"/>',
            rotate: '<path d="M9 2a6.500 6.500 0 1 1-4 .5M5 0l4 2-3 3" stroke-width="1.200"/>', scale: `<path d="M.5.5h15v15H.5z" fill="#b4dcf6" stroke="${B}"/><path d="M.5 7.500h8v8h-8z" fill="#fff"/>`,
            stretch: `<path d="M10 .5l5 15h-8V.5z" fill="#b4dcf6" stroke="${B}"/><path d="M1 .5h7v15H1z" fill="#fff"/><path d="M5 11h6M9 9l2 2-2 2" stroke="#000"/>`, trim: `<path d="M0 8h5"/><path d="M3 14 9 2M9 8h7" stroke="${B}" stroke-dasharray="3 1"/>`,
            extend: `<path d="M0 8h8"/><path d="M10 14l5-12M8 8h3" stroke="${B}" stroke-width="1.500"/>`, breakpt: `<path d="M.5 4.500h15M.5 4.500v9h15v-9" /><path d="M10 3h3v3h-3z" fill="${B}" stroke="none"/>`,
            break: `<path d="M4 4.500H.5v9h15v-9H13M7 4.500h2"/><path d="M3 3h3v3H3zM10 3h3v3h-3z" fill="${B}" stroke="none"/>`, join: `<path d="M0 8h16"/><path d="M5 6v4l3-2zM11 6v4L8 8z" fill="${B}" stroke="${B}"/>`,
            chamfer: `<path d="M.5 8v7.500h15V.5H8" fill="#eef"/><path d="M.5 8 8 .5" stroke="${B}" stroke-width="1.300"/>`, fillet: `<path d="M.5 10v5.500h15V.5H11" fill="#eef"/><path d="M.5 10C1 4 5 1 11 .5" stroke="${B}" stroke-width="1.300"/>`,
            blend: `<path d="M1 15V8M15 8V1" stroke-width="1.500"/><path d="M1 8c4-7 6 4 8 4s4 0 6-5" stroke="${B}"/>`, explode: `<path d="M4.500 7.500h7v7h-7zM0 8l3-2M1 14v-6M5 5l3-3h7M14 5v8M8 2 6 4M12 14l3-3M5 7l3-3h6l-2 3" fill="#cfe6fa" stroke="${B}"/>`,
            mprop: tan + `<path d="M0 1h15v3H0zM0 12h3v3H0z" fill="#5b9ae0" stroke="${B}"/><path d="M3 12V5l4 4" stroke="${B}"/>` + brush, mline: tan + '<path d="M1 15V9l4-3h6M0 12h3v3H0z" fill="#fff"/><path d="M5 12h9M11 9l3 3-3 3" stroke="#e01818" stroke-width="1.500"/><path d="M6 4l8-4 1 2-5 4z" fill="#d2700f"/>',
            mtext: tan + ch('A', 0, 10, 11, '#2a4a5a') + ch('a', 9, 8, 10, '#aaa') + brush, mlay: tan + stack + brush,
            mcolor: '<path d="M0 1h4v6H0z" fill="#e8289a"/><path d="M4 1h4v6H4z" fill="#5a28e8"/><path d="M8 1h4v6H8z" fill="#28c85a"/><path d="M12 1h4v6h-4z" fill="#f08a1c"/>'.replaceAll('/>', ' stroke="none"/>') + brush,
            mlaycol: stack + '<path d="M0 0h5v3H0z" fill="#e8289a"/><path d="M5 0h5v3H5z" fill="#28c85a"/><path d="M10 0h5v3h-5z" fill="#f08a1c"/>'.replaceAll('/>', ' stroke="none"/>') + brush,
            mblock: tan + `<path d="M1 1h9v14H1zM3 3h5v4H3zM3 9h4v4H3z" fill="#cfe3f6" stroke="${B}"/>` + brush,
            mAB: tan + ch('A', 0, 10, 10, '#444') + ch('B', 7, 9, 10, '#1c4fd0') + brush, mAs: tan + ch('A', 0, 11, 13, '#444') + ch('s', 11, 6, 8, '#1a6a80') + brush, mAh: tan + ch('A', 0, 11, 12, '#444') + ch('Ih', 8, 7, 8, '#1a6a9a') + brush,
            mcloud: tan + '<path d="M15 6H3C-1 6 0 1 3 1h10" /><path d="M5 14c-6 0-6-6 0-6h5" stroke-width="2.500"/>' + brush, mltype: tan + '<path d="M0 2h16" stroke-dasharray="3 1"/><path d="M0 5h16" stroke-dasharray="1 1"/><path d="M0 8h16" stroke-dasharray="5 1"/>' + brush,
            mhatch: tan + '<path d="M1 14V7l4-6v9zM5 13V5l4-4v9" fill="#eee"/>' + ch('T', 11, 6, 8, R) + brush,
            tprint: tan + tree + `<g transform="translate(3 -1) scale(.75)">${printer}</g>`, tcalc: tan + tree + '<path d="M9.500 0.500h5v9h-5z" fill="#ddd"/><path d="M11 2v6M13 2v6" stroke-dasharray="1 1"/>', tsave: tan + tree + `<g transform="translate(7 0) scale(.55)">${disk}</g>`, topen: tan + tree + '<path d="M3 3h10v4H3zM5 5h11" stroke-width=".8"/>',
            gbulb: tan + `<ellipse cx="6" cy="3.500" rx="5.500" ry="2.500" fill="#eee"/><g transform="translate(8 6) scale(.6)">${lamp('#9cc8ee')}</g>`, gload: tan + '<g fill="#eee" stroke-width=".8"><ellipse cx="6" cy="11" rx="5.500" ry="2.500" fill="#8ab4ee"/><ellipse cx="6" cy="7" rx="5.500" ry="2.500"/><ellipse cx="6" cy="3.500" rx="5.500" ry="2.500"/></g><path d="M15 11l-4 4v-3M11 15h3"/>',
            glamp: tan + discs + `<g transform="translate(8 5) scale(.65)">${lamp('#ffb52a')}</g>`,
            glamps: tan + discs + `<g transform="translate(8 6) scale(.6)">${lamp('#ffb52a')}</g><g transform="translate(3 6) scale(.6)">${lamp('#ffb52a')}</g>`,
            sspark: sel + '<path d="M8 4l6 6M14 4l-6 6M11 3v9M7 7h8" stroke="#f0941c"/><path d="M13 5l3-4" stroke="#a33"/>', sred: sel + '<path d="M8 9l4-4 3 3-4 4z" fill="#d01818"/><path d="M14 3l1-2M15 5h1"/>', sundo: sel + '<circle cx="13" cy="4" r="2.500" fill="#ccc" stroke="#889"/><path d="M15 9v3h-4M12 10l-2 2 2 2" stroke="#e01818" stroke-width="1.500"/>',
            serase: sel + '<path d="M7 9l7-8 2 2-6 9z" fill="#e0c070" stroke-width=".7"/><path d="M5 9l4 3-2 2-4-1z" fill="#58c0e8" stroke-width=".7"/><path d="M12 15h4" stroke="#e01818"/>', sredo: sel + '<circle cx="13" cy="4" r="2.500" fill="#ccc" stroke="#889"/><path d="M11 14h3v-5M12 10l2-2 2 2" stroke="#e01818" stroke-width="1.500"/>', ssweep: sel + '<path d="M12.500 4v5l-3 6h6l-3-6" fill="#f5b52a" stroke="#b06a10"/>',
            yq: '<path d="M0 3h7V1l3 3-3 3V5H0zM9 3h3V1l4 3-4 3V5H9z" fill="#3a6ea8" stroke="none"/>' + ch('YQ', 4, 15, 8, '#1c3fa0') + `<path d="M0 12h4M2 10v4" stroke="${R}"/>`, clip: '<path d="M5.500 2.500h10v12h-10z" fill="#e0ecea"/><path d="M8 1h5v3H8zM8 6h6M8 8h6M8 10h6"/>' + ch('XY', 0, 15, 7, '#000'),
            kml: '<circle cx="8" cy="7" r="6.500" fill="#3c9ac0" stroke-width=".6"/><path d="M5 3l4 2-1 4-3-1z" fill="#bfe0c4" stroke="none"/>' + ch('Kml', 1, 15, 8, R) + `<path d="M2 2l6 3" stroke="${R}" stroke-width="1.500"/>`, com: '<circle cx="6" cy="7" r="4.500"/><path d="M9 10l5 5" stroke-width="2"/>' + ch('com', 0, 7, 7, R), flashq: '<path d="M7 0 1 7h4L1 13l8-8H5l4-5z" fill="#f5c518" stroke-width=".8"/>' + ch('Q', 7, 14, 10, R),
            bframe: '<path d="M1 1h14v14H1z" fill="#fff" stroke="#0d5a24" stroke-width="1.500"/><path d="M11 1v14M3 4h2M3 8h2M3 12h2" stroke="#0d5a24"/>', bdim: '<path d="M0 0h16v16H0z" fill="#d8d0c8" stroke="none"/><path d="M0 3h15M3 0v16M5 6h9v9H5zM7 9h5M7 12h5" stroke="#a01818" stroke-width="1.200"/>',
            bcheck: '<path d="M0 0h16v16H0z" fill="#fff" stroke="none"/><path d="M1 5h9l2 6H4z" fill="#6ab0c8" stroke="#48a"/><path d="M5 9l3 4 7-11" stroke="#2a9a3a" stroke-width="2"/>', bview: '<path d="M1 3l10 1 1 6-9-1z" fill="#5aa7c4" stroke="#48a"/><circle cx="9" cy="8" r="3.500" fill="#dff" stroke="#789"/><path d="M11 11l4 4" stroke="#888" stroke-width="2"/>',
            bgear: '<path d="M3 9l8-8 4 1-3 7-5 6-6-2z" fill="#ddd" stroke-dasharray="2 1" stroke-width="1.500"/><circle cx="7" cy="9" r="2"/>', bhouse: '<path d="M1 6l6-4 8 3v9H2z" fill="#f3e28a" stroke="#a88a20"/><path d="M8 6l4 6H4z" fill="#146a30"/><circle cx="6" cy="12" r="2" fill="#123"/><circle cx="10" cy="12" r="2" fill="#123"/>',
            bAA: '<path d="M0 0h16v16H0z" fill="#bbb" stroke="none"/>' + ch('a', 1, 6, 8, '#111') + ch('A', 8, 15, 10, R) + '<path d="M3 8v5h4" stroke="#36c"/>', bAa: '<path d="M0 0h16v16H0z" fill="#ccc" stroke="none"/>' + ch('A', 0, 7, 9, '#111') + ch('a', 9, 15, 10, R) + '<path d="M3 8v5h4" stroke="#36c"/>',
            bshe: '<path d="M0 0h16v16H0z" fill="#dcd8cc" stroke="none"/><text x="1" y="13" font-size="14" fill="#2a6db8" stroke="none" font-family="Noto Sans CJK SC">设</text>', bding: '<path d="M0 0h16v16H0z" fill="#dcd8cc" stroke="none"/><text x="1" y="13" font-size="14" fill="#2a6db8" stroke="none" font-family="Noto Sans CJK SC">定</text>',
            bank: '<path d="M0 0h16v16H0z" fill="#ddd" stroke="#aaa"/><path d="M1 5l7-4 7 4zM2 6h3v7H2zM6.500 6h3v7h-3zM11 6h3v7h-3zM1 14h14v1H1z" fill="#14467a" stroke="none"/>', runner: '<path d="M0 0h16v16H0z" fill="#eee" stroke="#aaa"/><circle cx="11" cy="2.500" r="2" fill="#14467a" stroke="none"/><path d="M3 5h5l3 3h3M8 5l-2 5 4 2v4M6 10l-5 3" stroke="#14467a" stroke-width="2"/>',
            swap: '<path d="M0 0h16v16H0z" fill="#eee" stroke="#aaa"/><path d="M6 2c-6 2-6 9-1 12M3 12l2 2 1-3"/><path d="M10 2c6 2 6 9 1 12L8 15c4-4 4-8 2-13z" fill="#2050c0" stroke="#1a5a5a"/>', eye: '<path d="M0 0h16v16H0z" fill="#e4e4e4" stroke="#aaa"/><path d="M0 8c4-6 12-6 16 0-5 5-11 5-16 0z" fill="#9fb8f0" stroke="#99a"/><circle cx="8" cy="8" r="2.500" fill="#1c38c0" stroke="#1c38c0"/>',
            eyeg: '<path d="M0 0h16v16H0z" fill="#e4e4e4" stroke="#aaa"/><path d="M0 8c4-6 12-6 16 0-5 5-11 5-16 0z" fill="#ddd" stroke="#888"/><circle cx="8" cy="8" r="2.500" fill="#888"/>', imgsw: '<path d="M0 0h16v16H0z" fill="#fff" stroke="none"/><path d="M1 2h7v5H1z" fill="#e88a3a" stroke="#39c"/><path d="M8 9h6v4H8z" fill="#3aa86a" stroke="#eb3"/><path d="M3 9c0 3 1 4 4 4" stroke="#48c" stroke-width="2"/>', pc: '<path d="M2 1h9v8H2zM5 9v4h8" fill="#4a8ee0" stroke="#5a6ab8"/><path d="M11 4h4v9h-4z" fill="#b8c0e8" stroke="#5a6ab8"/>',
            pmm: `<path d="M0 8h12" stroke="${R}" stroke-width="1.500"/>` + ch('m', 3, 6, 9, B) + ch('mm', 0, 14, 8, B) + '<path d="M10 6l5-5 1 2-5 5z" fill="#f0a030"/>', pmap: `<path d="M1 1h14v14H1z" fill="#fff" stroke="${B}" stroke-width="1.500"/><path d="M3 4c4-2 4 4 8 2s3 5 0 6-9-3-8-8zM5 6c3 0 3 4 7 3" stroke="${B}"/>`, pred: '<path d="M0 0h16v16H0z" fill="#e8c070" stroke="none"/><path d="M2 2h6v6H2z" fill="#fff" stroke="#c22" stroke-width="1.500"/><path d="M0 12h16M8 10v6" stroke="#d8861c" stroke-width="2"/><path d="M12 2v6" stroke="#c22" stroke-width="3"/>',
            pout: `<path d="M1 14.500V7h4V1.500h6V7h4v7.500z" fill="#fff" stroke="${R}" stroke-width="1.500"/><path d="M4 12V9h3V5h2v4h3v3z" stroke="${B}"/>`,
            road1: `<path d="M0 5h5V0M11 0v5h5M0 11h5v5M11 16v-5h5" stroke="#19689e" stroke-width="1.500"/>`, road2: `<path d="M0 5h2l3-3V0M11 0v2l3 3h2M0 11h2l3 3v2M11 16v-2l3-3h2" stroke="#19689e" stroke-width="1.500"/>`, road3: `<path d="M0 3h16M0 14h16" stroke="#19689e"/><path d="M0 9h16" stroke="${R}" stroke-width="1.500"/><path d="M3 3h10L8 9z" fill="#3a9a60" stroke="none"/>`,
            road4: ch('i=0', 2, 6, 7, '#335') + ch('L=0', 2, 15, 7, '#335') + `<path d="M0 8h14M12 6l3 2-3 2" stroke="#19689e"/>`, road5: `<path d="M1 1c0 8 4 13 13 14" stroke="${R}" stroke-width="1.300"/><path d="M14 3 6 10M6 6v4h4" stroke="#19689e" stroke-width="1.500"/>`, road6: '<path d="M3 1v14M13 1v14" stroke="#19689e"/><path d="M8 1v14" stroke="#e01818"/><path d="M0 11h16M1 9v4M6 9v4M11 9v4" stroke="#111"/>',
            ramp: `<path d="M1 3h14v10H1zM5 3v10" stroke="#335"/><path d="M2 8h10M9 5l3 3-3 3" stroke="#19689e"/>`, park: `<path d="M0 1.500h16v4H0zM0 10.500h16v4H0zM4 1v5M8 1v5M12 1v5M4 10v5M8 10v5M12 10v5" stroke="#19689e" stroke-width="1.300"/>`, parkc: `<path d="M0 1.500h9v4H0zM0 10.500h9v4H0zM4 1v5M4 10v5" stroke="#19689e" stroke-width="1.300"/><path d="M8 1.500h7v12H8z" fill="#eee"/><path d="M10 6v6M13 6v6" stroke-dasharray="1 1"/>`,
            tree4: '<g fill="#dff0f4" stroke="#3a7a1c"><circle cx="4" cy="4" r="3"/><circle cx="12" cy="4" r="3"/><circle cx="4" cy="12" r="3"/><circle cx="12" cy="12" r="3"/></g>', tree3: '<g fill="#dff0f4" stroke="#3a7a1c"><circle cx="3.500" cy="3.500" r="3"/><circle cx="8" cy="8" r="3"/><circle cx="12.500" cy="12.500" r="3"/></g>', paths: `<path d="M0 2h16M0 14h16M1 6c4-5 6 4 10 0s5 3 4 6M1 12c3-6 6-2 8 0s4-4 5-7M2 9c3-6 8-6 10 0" stroke="#19689e"/>`,
            earth: '<circle cx="8" cy="8" r="7.500" fill="#2a7cc8" stroke="#123a6a"/><path d="M3 3l5 0 2 3-4 3-3-2zM10 9l4 0-2 5-3-2z" fill="#bfe0f4" stroke="none"/>', coord: ch('x', 6, 5, 7, '#33c') + ch('Y', 6, 13, 7, '#33c') + '<path d="M0 13l6-6h10M10 4h6M10 11h6" />', coordc: ch('x', 6, 5, 7, '#33c') + '<path d="M0 10l5-5h10M8 7h8"/><path d="M5 11l3 4 5-5" stroke="#e01818" stroke-width="1.500"/>', gelev: '<path d="M1 2h3v3H1zM6 2h3v3H6zM11 2h3v3h-3z"/><path d="M2 8h12l-6 6z" fill="#2f8a58" stroke="none"/>',
            cgrid: '<path d="M0 4h16M0 12h16M4 0v16M12 0v16" stroke="#19689e" stroke-width="1.300" stroke-dasharray="2 2"/>', north: '<circle cx="8" cy="8" r="7" stroke="#111" stroke-width="1.300"/><path d="M8 1l2 14H6z" fill="#111"/>', rose: '<circle cx="8" cy="8" r="5"/><path d="M8 0v16M0 8h16M2 14 14 2M8 8l5 3-5 3z"/>', legend: '<path d="M0 .5h15M1 3.500h14v11H1z"/><path d="M3 6h3M3 9h3M3 12h3" stroke="#e01818" stroke-width="1.500"/><path d="M8 6h5M8 9h5M8 12h5"/>',
            s1: '<path d="M0 6h12M6 0v12M4 4h4v4H4z"/><path d="M10 9h4v3h-4v4" stroke="#1c6fc4" stroke-width="1.500"/>', s2: '<path d="M1 3h10M1 7h10M1 11h10" stroke-width="1.500" stroke-dasharray="1.500 2"/><path d="M13.500 2v11H11M1 14h12"/>', s3: '<path d="M.5.5h15v15H.5z" fill="#eee"/><path d="M3.500 1v14M6.500 1v14M9.500 1v14M12.500 1v14M1 3.500h14M1 6.500h14M1 9.500h14M1 12.500h14" stroke-width=".8"/>', s4: '<path d="M2 1v13.500h13M2 9h5v5"/>', s5: '<circle cx="7" cy="9" r="5"/><path d="M15 8H6l6-6M10 9v4"/>', s6: '<path d="M2.500 2.500h12v12h-12z" fill="#f4f4f4"/><circle cx="2.500" cy="2.500" r="2" fill="#fff" stroke="#d4541c"/>',
            s7: '<path d="M3.500 5.500l3-4h9v9l-3 4h-9z" fill="#ccc"/><path d="M3.500 5.500h9v9h-9z" fill="#f4f4f4"/><circle cx="2" cy="14" r="2" fill="#fff" stroke="#d4541c"/>', s8: '<path d="M13 2 2 14h12M10 7c2 2 2 3 2 5"/>', s9: '<path d="M2 1v13h13M2 14l8-8"/><path d="M12 1 9 6h3l-2 4 5-6h-3z" fill="#f5a518" stroke="#d8701c" stroke-width=".7"/>', s10: '<path d="M0 6h11M5 2v8" stroke="#000" stroke-width="1.500"/><path d="M7.500 8.500h7v5h-7z" fill="#eee" stroke="#000"/>', s11: '<path d="M0 9h16M9 3v11" stroke="#000" stroke-width="2"/>', s12: '<path d="M.5.5h15v15H.5z" fill="#9ccbe8" stroke="#4a7ab8"/><path d="M2 4h12M2 8h12M2 12h12" stroke="#dcf0fa" stroke-width="2" stroke-dasharray="2 2"/>', s13: '<path d="M4 2h8v12H4zM6 5h4M6 7.500h4M6 10h4M6 12h4" fill="#fff" stroke="#111"/>', s14: '<path d="M0 3h9M4 0v8M6 6h7v6H6z"/><path d="M9 9h6v6H9z" fill="#5a9a4a"/>', s15: '<path d="M5.500.5h5v5h5v5h-5v5h-5v-5h-5v-5h5z" fill="#fff"/>',
            lay1: '<path d="M2 1h12v11H2zM0 14h16" fill="#eee"/><path d="M5 3v7h6z"/>', lay2: '<path d="M1 2h6v8H1zM9 2h6v8H9zM0 13h16" fill="#eee"/>', anno: '<path d="M8 1v5l-6 8 6-3 6 3-6-8" fill="#fff"/>', annov: '<path d="M7 1v5l-6 8 6-3 6 3-6-8" fill="#fff"/><circle cx="12" cy="9" r="2.500" fill="#f5b52a" stroke="#c67a10"/>', hammer: '<path d="M3 1l8 5M9 3l-3 6 6 6M3 12l6-5" />', gauge: '<circle cx="8" cy="9" r="6" fill="#777" stroke="#999"/><path d="M8 9 4 3M7 1v2M11 2l-1 2" stroke="#ddd"/>',
            mailt: '<path d="M1 7l7-5 7 5v7H1z" fill="#eef6fc" stroke="#3a78b8"/><path d="M3 4h10v4l-5 3-5-3z" fill="#f5c56a" stroke="#b8862a"/>', comm: '<path d="M7 7h8v8H7z" fill="#fff" stroke="#26c"/><path d="M1 5c3-5 6 2 9-2M4 5v4M8 9h6M8 12h6" stroke="#bcd8f0"/>', trust: '<path d="M2 2h9l2 3v7H2z" fill="#5a8ec8"/><path d="M4 2h5v4H4z" fill="#fff" stroke-width=".6"/><path d="M7 11l3 4 5-7" stroke="#2fae2a" stroke-width="2"/>', wnd: '<path d="M1 1.500h14v13H1z" fill="#fff"/><path d="M1 4h14" stroke-width="2"/>'
        };

        function icon(name) {
            return `<svg class="size-[17px] shrink-0" viewBox="0 0 16 16" fill="none" stroke="currentColor">${I[name] || ''}</svg>`;
        }

        const caret = '<svg class="h-1 w-2" viewBox="0 0 8 4"><path d="M0 0h8L4 4z" fill="#333"/></svg>';
        const grip = '<span class="w-[7px] shrink-0 bg-[#6a6a6a] px-px py-1"><span class="block h-full bg-[radial-gradient(#1e1e1e_1px,transparent_1px)] bg-[size:3px_3px]"></span></span>';

        function cells(list, wide) {
            return list.split(' ').map(n => {
                if (n === '|') return '<span class="flex h-full w-1.5 shrink-0 justify-center py-px"><span class="w-px bg-[#999]"></span></span>';
                if (n === '.') return `<button aria-label="更多" class="flex h-full ${wide ? 'w-3' : 'w-[13px]'} shrink-0 items-center justify-center">${caret}</button>`;
                if (n[0] === '@') return `<div class="relative h-full w-[120px] border border-[#a8a8a8] bg-[#e1e1e1]"><select aria-label="样式" class="w-full appearance-none ${n === '@Standard' ? 'pl-1.5' : 'pl-4'} text-[12px] leading-5"><option>${n.slice(1)}</option></select><svg class="pointer-events-none absolute top-1.5 right-1 h-2 w-2" viewBox="0 0 8 8" fill="none" stroke="#444"><path d="M0 2l4 4 4-4"/></svg></div>`;
                return `<button aria-label="${n}" class="flex h-full ${wide ? 'w-6' : 'w-[23px]'} shrink-0 items-center justify-center">${icon(n)}</button>`;
            }).join('');
        }

        document.querySelectorAll('[data-icon]').forEach(el => {
            el.setAttribute('viewBox', '0 0 16 16');
            el.setAttribute('fill', 'none');
            el.setAttribute('stroke', 'currentColor');
            el.innerHTML = I[el.dataset.icon];
        });
        document.querySelectorAll('[data-icons]').forEach(el => el.innerHTML = cells(el.dataset.icons, el.dataset.pitch));
        document.querySelectorAll('[data-grip]').forEach(el => el.outerHTML = grip);
        document.querySelectorAll('[data-bar]').forEach(el => {
            el.className = 'flex items-center border border-[#2e2e2e] bg-[#ececec] text-[#3a404c]';
            el.innerHTML = `<span class="flex h-full shrink-0">${grip}</span>` + cells(el.dataset.bar);
        });
        document.querySelectorAll('[data-vbar]').forEach(el => {
            el.className = 'flex w-[25px] flex-col items-center border-x-2 border-y border-[#333] bg-[#ececec] text-[#3a404c]';
            el.innerHTML = '<span class="h-2 w-full bg-[#6a6a6a] py-px"><span class="mx-auto block h-full w-3.5 bg-[radial-gradient(#1e1e1e_1px,transparent_1px)] bg-[size:3px_3px]"></span></span>' +
                el.dataset.vbar.split(' ').map(n => n === '|'
                    ? '<span class="flex h-1.5 w-5 items-center"><span class="h-px w-full bg-[#999]"></span></span>'
                    : `<button aria-label="${n}" class="flex h-[22px] items-center">${icon(n)}</button>`).join('');
        });

        // open drawings: [label, width, lock]
        const files = [['立面及剖面*', 123], ['建筑总说明(2019...一、二期正式出图)*', 258, 1], ['5#-8#楼总平施工图', 145], ['JZ5#-8#楼及地下室说明*', 177], ['5#7#施工图*', 123, 1], ['A.6#.建筑施工图.202018*', 191, 1], ['A.8#.施工图.202018*', 167, 1], ['8#、10#楼_t8*', 123], ['5#、7#楼_t8*', 123], ['6#、12#楼_t8*', 123]];
        const lockSvg = '<svg class="h-2.5 w-2 shrink-0" viewBox="0 0 8 10" fill="#666"><path d="M0 4h8v6H0z"/><path d="M2 5V2.500c0-2 4-2 4 0V5" fill="none" stroke="#666" stroke-width="1.500"/></svg>';
        document.getElementById('fileTabs').innerHTML = files.map(([label, w, lock], i) => {
            const on = i === 1;
            return `<a href="#" style="width:${w}px" class="relative isolate mb-0.5 flex h-[22px] shrink-0 items-center gap-1 pl-3 text-[12px] whitespace-nowrap ${on ? 'z-10 text-black' : 'text-[#4a4a4a]'}">
                <span class="absolute inset-y-0 left-0 -z-10 w-1/2 origin-bottom -skew-x-[22deg] rounded-tl-lg border-t border-l border-[#c4c4c4] ${on ? 'bg-linear-to-b from-[#c6c6c6] to-[#a0a0a0]' : 'bg-linear-to-b from-[#acacac] to-[#969696]'}"></span>
                <span class="absolute inset-y-0 right-0 -z-10 w-[55%] origin-bottom skew-x-[22deg] rounded-tr-lg border-t border-r border-[#c4c4c4] ${on ? 'bg-linear-to-b from-[#c6c6c6] to-[#a0a0a0]' : 'bg-linear-to-b from-[#acacac] to-[#969696]'}"></span>
                ${lock ? lockSvg : ''}<span>${label}</span>${on ? '<svg class="ml-1 size-2" viewBox="0 0 8 8" fill="none" stroke="#777" stroke-width="2"><path d="M1 1l6 6M7 1 1 7"/></svg>' : ''}</a>`;
        }).join('') + '<button aria-label="新建" class="mb-1 ml-2.5 self-end"><svg class="h-4 w-[22px]" viewBox="0 0 22 16"><path d="M0 0h13c6 0 8 8 9 16H8C3 14 1 8 0 0z" fill="#777" stroke="#555"/><path d="M11 4v8M7 8h8" stroke="#aaa" stroke-width="2"/></svg></button>';

        const docs = [['立面及剖面', 78], ['建筑总说明(20190716（一、二期正式出图)', 245], ['5#-8#楼总平施工图', 119], ['JZ5#-8#楼及地下室说明', 143], ['5#7#施工图', 77], ['A.6#.建筑施工图.202018', 149], ['A.8#.施工图.202018', 126], ['8#、10#楼_t8', 89], ['5#、7#楼_t8', 83], ['6#、12#楼_t8', 89]];
        document.getElementById('docTabs').innerHTML = docs.map(([label, w], i) =>
            `<button style="width:${w}px" class="h-[19px] shrink-0 border-b border-[#555] whitespace-nowrap ${i === 1 ? 'bg-[#fae6e6] text-[#1616e6]' : 'border-r-2 bg-[#f0f0f0]'}">${label}</button>`).join('');

        // palette: 0 starts a new group, an entry is [icon, label]
        const menus = ['设 置', '轴网柱子', '墙 体', '门 窗', '房间屋顶', '楼梯其他', '立 面', '剖 面', '文字表格', '尺寸标注', '符号标注', '图层控制', '工 具', '三维建模', '图块图案', '场地布置'];
        const tools = [['pmm', '单位设置'], ['pmap', '转地形图'], ['pred', '场地红线'], ['pout', '建筑轮廓'], 0, ['road1', '道路绘制'], ['road2', '道路圆角'], ['road3', '道路标高'], ['road4', '道路坡度'], ['road5', '道路半径'], ['road6', '路宽标注'], 0, ['ramp', '地下坡道'], ['park', '车位布置'], ['parkc', '车位统计'], 0, ['tree4', '成片布树'], ['tree3', '任意布树'], ['paths', '绘景观路'], 0, ['earth', '设坐标系'], ['coord', '坐标标注'], ['coordc', '坐标检查'], ['gelev', '总图标高'], 0, ['cgrid', '坐标网格'], ['north', '画指北针'], ['rose', '风 玫 瑰'], ['legend', '总平图例']];
        const row = (mark, label) => `<a href="#" class="flex h-[18px] items-center justify-between pr-[3px] pl-0.5"><span class="flex w-[17px] justify-center text-[#3a404c]">${mark}</span><span class="flex w-12 justify-between whitespace-nowrap">${label.split(' ').map(s => `<span>${s}</span>`).join('')}</span></a>`;
        const tri = '<svg class="h-2.5 w-1.5" viewBox="0 0 6 10" fill="#2a65a0"><path d="M1 0v10l5-5z"/></svg>';
        const triDown = '<svg class="h-1.5 w-2.5" viewBox="0 0 10 6" fill="#2a65a0"><path d="M0 0h10L5 6z"/></svg>';
        document.getElementById('palette').innerHTML =
            menus.map((m, i) => row(i === 15 ? triDown : tri, m)).join('') +
            '<div class="mt-px mb-0.5 h-px bg-[#888]"></div><div class="bg-[#eeeeea]">' +
            tools.map(t => t ? row(icon(t[0]), t[1]) : '<div class="my-0.5 ml-[3px] h-0.5 border-t border-[#999] bg-white"></div>').join('') +
            '</div><div class="mt-0.5 mb-px h-px bg-[#999]"></div>' + row(tri, '文件布图') + row(tri, '其 它');

        const lit = [3, 5, 6, 7, 8, 9, 11];
        document.getElementById('toggles').innerHTML = Array.from({ length: 15 }, (_, i) =>
            `<button aria-label="s${i + 1}" class="flex w-[22px] items-center justify-center border-r border-[#444] text-[#333] ${lit.includes(i) ? 'bg-linear-to-b from-[#e4f4fa] to-[#8cc8dc]' : 'bg-linear-to-b from-[#a0a0a0] to-[#bcbcbc]'}">${icon('s' + (i + 1))}</button>`).join('');

        // right part of the status bar: [width, content, style]
        const right = [[31, '模型'], [22, icon('lay1')], [22, icon('lay2')], [17, '', 2], [55, icon('anno') + '<span>1:1</span>&nbsp;' + caret], [22, icon('annov')], [22, icon('hammer'), 3], [6, '', 2], [22, icon('gear')], [22, icon('unlock')], [22, icon('gauge')], [31, '编组', 1], [30, '基线'], [30, '填充'], [31, '加粗'], [54, '动态标注'], [87, icon('mailt') + icon('comm') + icon('trust') + icon('bulb'), 2], [17, caret], [22, icon('wnd')]];
        const looks = ['bg-linear-to-b from-[#a0a0a0] to-[#bcbcbc]', 'bg-linear-to-b from-[#d0ecf4] to-[#86c4d8]', 'bg-[#6e6e6e] gap-1', 'bg-linear-to-b from-[#a0a0a0] to-[#bcbcbc] text-[#888]'];
        document.getElementById('statusRight').innerHTML = right.map(([w, html, s]) =>
            `<button style="width:${w}px" class="flex shrink-0 items-center justify-center border-r border-[#444] text-[12px] whitespace-nowrap ${looks[s || 0]}">${html}</button>`).join('');
    </script>
</body>
</html>
